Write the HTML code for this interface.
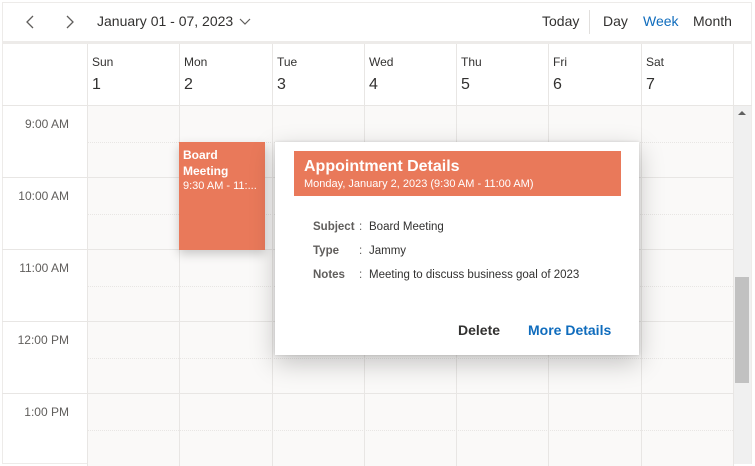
<!DOCTYPE html>
<html><head><meta charset="utf-8"><style>
*{margin:0;padding:0;box-sizing:border-box}
body{width:755px;height:466px;overflow:hidden;background:#fff;font-family:"Segoe UI","Liberation Sans",sans-serif;color:#323130;position:relative}
.abs{position:absolute}
.vl{position:absolute;width:1px;background:#e8e6e4}
.hl{position:absolute;height:1px;background:#e8e6e4}
.dl{position:absolute;height:0;border-top:1px dotted #e8e6e4}
.dn{position:absolute;font-size:12px;color:#323130}
.dd{position:absolute;font-size:16px;color:#323130}
.tm{position:absolute;font-size:12px;color:#605e5c;width:80px;text-align:right}
</style></head><body>
<div class="abs" style="left:2px;top:2px;width:750px;height:462px;border:1px solid #edebe9"></div>
<div class="abs" style="left:2px;top:41px;width:750px;height:3px;background:#edebe9"></div>
<svg class="abs" style="left:24px;top:15px" width="12" height="14"><path d="M9 1L3 7L9 13" stroke="#605e5c" stroke-width="1.3" fill="none"/></svg>
<svg class="abs" style="left:64px;top:15px" width="12" height="14"><path d="M3 1L9 7L3 13" stroke="#605e5c" stroke-width="1.3" fill="none"/></svg>
<div class="abs" style="left:97px;top:13px;font-size:14px">January 01 - 07, 2023</div>
<svg class="abs" style="left:239px;top:18px" width="12" height="8"><path d="M1 1L6 6L11 1" stroke="#605e5c" stroke-width="1.2" fill="none"/></svg>
<div class="abs" style="left:542px;top:13px;font-size:14px">Today</div>
<div class="abs" style="left:589px;top:10px;width:1px;height:24px;background:#e1dfdd"></div>
<div class="abs" style="left:603px;top:13px;font-size:14px">Day</div>
<div class="abs" style="left:643px;top:13px;font-size:14px;color:#0f6cbd">Week</div>
<div class="abs" style="left:693px;top:13px;font-size:14px">Month</div>
<div class="abs" style="left:87px;top:106px;width:646px;height:360px;background:#faf9f8"></div>
<div class="hl" style="left:2px;top:105px;width:750px"></div>
<div class="vl" style="left:87px;top:44px;height:422px"></div>
<div class="vl" style="left:179px;top:44px;height:422px"></div>
<div class="vl" style="left:272px;top:44px;height:422px"></div>
<div class="vl" style="left:364px;top:44px;height:422px"></div>
<div class="vl" style="left:456px;top:44px;height:422px"></div>
<div class="vl" style="left:548px;top:44px;height:422px"></div>
<div class="vl" style="left:641px;top:44px;height:422px"></div>
<div class="vl" style="left:733px;top:44px;height:422px"></div>
<div class="dn" style="left:92px;top:55px">Sun</div><div class="dd" style="left:92px;top:76px">1</div>
<div class="dn" style="left:184px;top:55px">Mon</div><div class="dd" style="left:184px;top:76px">2</div>
<div class="dn" style="left:277px;top:55px">Tue</div><div class="dd" style="left:277px;top:76px">3</div>
<div class="dn" style="left:369px;top:55px">Wed</div><div class="dd" style="left:369px;top:76px">4</div>
<div class="dn" style="left:461px;top:55px">Thu</div><div class="dd" style="left:461px;top:76px">5</div>
<div class="dn" style="left:553px;top:55px">Fri</div><div class="dd" style="left:553px;top:76px">6</div>
<div class="dn" style="left:646px;top:55px">Sat</div><div class="dd" style="left:646px;top:76px">7</div>
<div class="hl" style="left:2px;top:177px;width:731px"></div>
<div class="hl" style="left:2px;top:249px;width:731px"></div>
<div class="hl" style="left:2px;top:321px;width:731px"></div>
<div class="hl" style="left:2px;top:393px;width:731px"></div>
<div class="dl" style="left:87px;top:142px;width:646px"></div>
<div class="dl" style="left:87px;top:214px;width:646px"></div>
<div class="dl" style="left:87px;top:286px;width:646px"></div>
<div class="dl" style="left:87px;top:358px;width:646px"></div>
<div class="dl" style="left:87px;top:430px;width:646px"></div>
<div class="tm" style="left:-11px;top:117px">9:00 AM</div>
<div class="tm" style="left:-11px;top:189px">10:00 AM</div>
<div class="tm" style="left:-11px;top:261px">11:00 AM</div>
<div class="tm" style="left:-11px;top:333px">12:00 PM</div>
<div class="tm" style="left:-11px;top:405px">1:00 PM</div>
<div class="abs" style="left:734px;top:106px;width:17px;height:358px;background:#f0f0f0"></div>
<svg class="abs" style="left:738px;top:110px" width="8" height="6"><path d="M0 5L4 1L8 5Z" fill="#606060"/></svg>
<div class="abs" style="left:735px;top:277px;width:14px;height:106px;background:#c1c1c1"></div>
<div class="abs" style="left:179px;top:142px;width:86px;height:108px;background:#e9795a;box-shadow:0 4px 10px rgba(0,0,0,.2);color:#fff;padding:5px 4px">
<div style="font-size:12px;font-weight:bold;line-height:16px">Board<br>Meeting</div>
<div style="font-size:11px;line-height:14px;white-space:nowrap;overflow:hidden">9:30 AM - 11:...</div></div>
<div class="abs" style="left:275px;top:142px;width:364px;height:213px;background:#fff;box-shadow:0 8px 24px rgba(0,0,0,.22),0 0 3px rgba(0,0,0,.15)">
<div class="abs" style="left:19px;top:9px;width:327px;height:45px;background:#e9795a;color:#fff;padding:5px 10px">
<div style="font-size:16px;font-weight:bold;line-height:21px">Appointment Details</div>
<div style="font-size:11px;line-height:15px">Monday, January 2, 2023 (9:30 AM - 11:00 AM)</div></div>
<div class="abs" style="left:38px;top:73px;font-size:11.5px;line-height:24px;color:#605e5c;font-weight:bold">Subject<br>Type<br>Notes</div>
<div class="abs" style="left:84px;top:73px;font-size:11.5px;line-height:24px;color:#605e5c">:<br>:<br>:</div>
<div class="abs" style="left:94px;top:73px;font-size:11.5px;line-height:24px;color:#323130">Board Meeting<br>Jammy<br>Meeting to discuss business goal of 2023</div>
<div class="abs" style="left:183px;top:180px;font-size:14px;font-weight:bold;color:#323130">Delete</div>
<div class="abs" style="left:253px;top:180px;font-size:14px;font-weight:bold;color:#0f6cbd">More Details</div>
</div>
</body></html>
